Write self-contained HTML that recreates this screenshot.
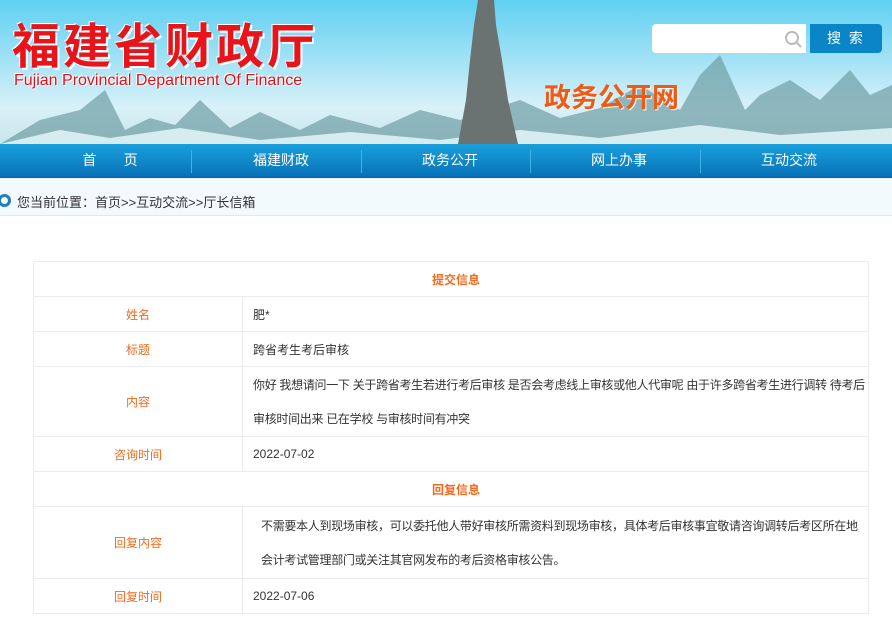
<!DOCTYPE html>
<html><head><meta charset="utf-8"><style>
*{margin:0;padding:0;box-sizing:border-box}
body{width:892px;height:619px;overflow:hidden;background:#fff;font-family:"Liberation Sans","Noto Sans CJK SC",sans-serif;position:relative}
.banner{position:absolute;left:0;top:0;width:892px;height:144px;background:linear-gradient(180deg,#5fd0f2 0%,#a8e4f6 45%,#d9f1f8 75%,#c9e5ec 100%);overflow:hidden}
.t1{position:absolute;left:12px;top:14px;font-size:48px;font-weight:bold;color:#e8141c;letter-spacing:3px;font-family:"Noto Sans CJK SC",sans-serif;text-shadow:2px 2px 0 #fff,-1px -1px 0 #fff;line-height:56px}
.t2{position:absolute;left:14px;top:72px;font-size:16px;color:#e01018;text-shadow:1px 1px 0 #fff,-1px -1px 0 #fff}
.t3{position:absolute;left:544px;top:76px;font-size:27px;color:#f05a14;font-weight:bold;text-shadow:1px 1px 0 #fff}
.search{position:absolute;left:652px;top:24px;width:154px;height:29px;background:#fff;border-radius:4px 0 0 4px}
.btn{position:absolute;left:810px;top:24px;width:72px;height:29px;background:#0a86c8;border-radius:0 4px 4px 0;color:#fff;font-size:14px;text-align:center;line-height:29px;letter-spacing:2px}
.nav{position:absolute;left:0;top:144px;width:892px;height:34px;background:linear-gradient(#1aa0dc,#0873b8);border-bottom:2px solid #0b6aa8}
.nav span{position:absolute;top:0;line-height:32px;color:#fff;font-size:14px;width:170px;text-align:center}
.nav i{position:absolute;top:6px;width:1px;height:23px;background:#3fb3e6}
.crumb{position:absolute;left:0;top:178px;width:892px;height:38px;background:#f2fafd;border-bottom:1px solid #dfe9ee;border-top:1px solid #e6eff3}
.crumb div{position:absolute;left:17px;top:13px;font-size:13px;color:#333}
.dot{position:absolute;left:-2px;top:15px;width:13px;height:13px;border-radius:50%;border:3px solid #1f7fc4;background:#fff}
table{position:absolute;left:33px;top:261px;width:836px;border-collapse:collapse;border:1px solid #e0e0e0;font-size:12px}
td{border:1px solid #ececec;height:35px;color:#333;padding-left:10px}
td.l{width:209px;text-align:center;color:#f26b1d;padding:0}
td.h{text-align:center;color:#f26b1d;font-weight:bold}
.w{letter-spacing:-0.3px;padding-right:0}
</style></head><body>
<div class="banner">
<svg width="892" height="144" style="position:absolute;left:0;top:0">
<path d="M0 144 L40 120 L80 110 L105 90 L125 130 L150 118 L175 125 L200 100 L230 128 L260 112 L300 130 L330 115 L380 128 L420 110 L460 120 L520 100 L560 118 L600 108 L640 85 L680 110 L700 75 L720 55 L745 110 L760 95 L790 80 L820 100 L850 70 L870 95 L892 85 L892 144Z" fill="#6f9ea4" opacity=".7"/>
<path d="M0 144 L60 130 L110 138 L180 128 L260 140 L350 132 L440 140 L520 130 L600 138 L700 125 L780 135 L892 128 L892 144Z" fill="#d7ecef"/>
<path d="M478 0 L494 0 L496 25 L502 60 L508 100 L518 144 L458 144 L466 100 L470 60 L474 25Z" fill="#6b7372"/>
</svg>
<div class="t1">福建省财政厅</div>
<div class="t2">Fujian Provincial Department Of Finance</div>
<div class="t3">政务公开网</div>
<div class="search"><svg width="18" height="18" style="position:absolute;right:4px;top:6px"><circle cx="8" cy="8" r="6" fill="none" stroke="#bbb" stroke-width="2"/><path d="M12 12 L17 17" stroke="#bbb" stroke-width="2"/></svg></div>
<div class="btn">搜 索</div>
</div>
<div class="nav">
<span style="left:25px">首&nbsp;&nbsp;&nbsp;&nbsp;&nbsp;&nbsp;&nbsp;页</span><i style="left:191px"></i>
<span style="left:196px">福建财政</span><i style="left:361px"></i>
<span style="left:365px">政务公开</span><i style="left:530px"></i>
<span style="left:534px">网上办事</span><i style="left:700px"></i>
<span style="left:704px">互动交流</span>
</div>
<div class="crumb"><span class="dot"></span><div>您当前位置：首页&gt;&gt;互动交流&gt;&gt;厅长信箱</div></div>
<table>
<tr><td colspan="2" class="h">提交信息</td></tr>
<tr><td class="l">姓名</td><td>肥*</td></tr>
<tr><td class="l">标题</td><td>跨省考生考后审核</td></tr>
<tr><td class="l" style="height:70px">内容</td><td class="w" style="line-height:34px">你好 我想请问一下 关于跨省考生若进行考后审核 是否会考虑线上审核或他人代审呢 由于许多跨省考生进行调转 待考后审核时间出来 已在学校 与审核时间有冲突</td></tr>
<tr><td class="l">咨询时间</td><td>2022-07-02</td></tr>
<tr><td colspan="2" class="h">回复信息</td></tr>
<tr><td class="l" style="height:72px">回复内容</td><td class="w" style="line-height:34px;padding-left:18px">不需要本人到现场审核，可以委托他人带好审核所需资料到现场审核，具体考后审核事宜敬请咨询调转后考区所在地会计考试管理部门或关注其官网发布的考后资格审核公告。</td></tr>
<tr><td class="l">回复时间</td><td>2022-07-06</td></tr>
</table>
</body></html>
